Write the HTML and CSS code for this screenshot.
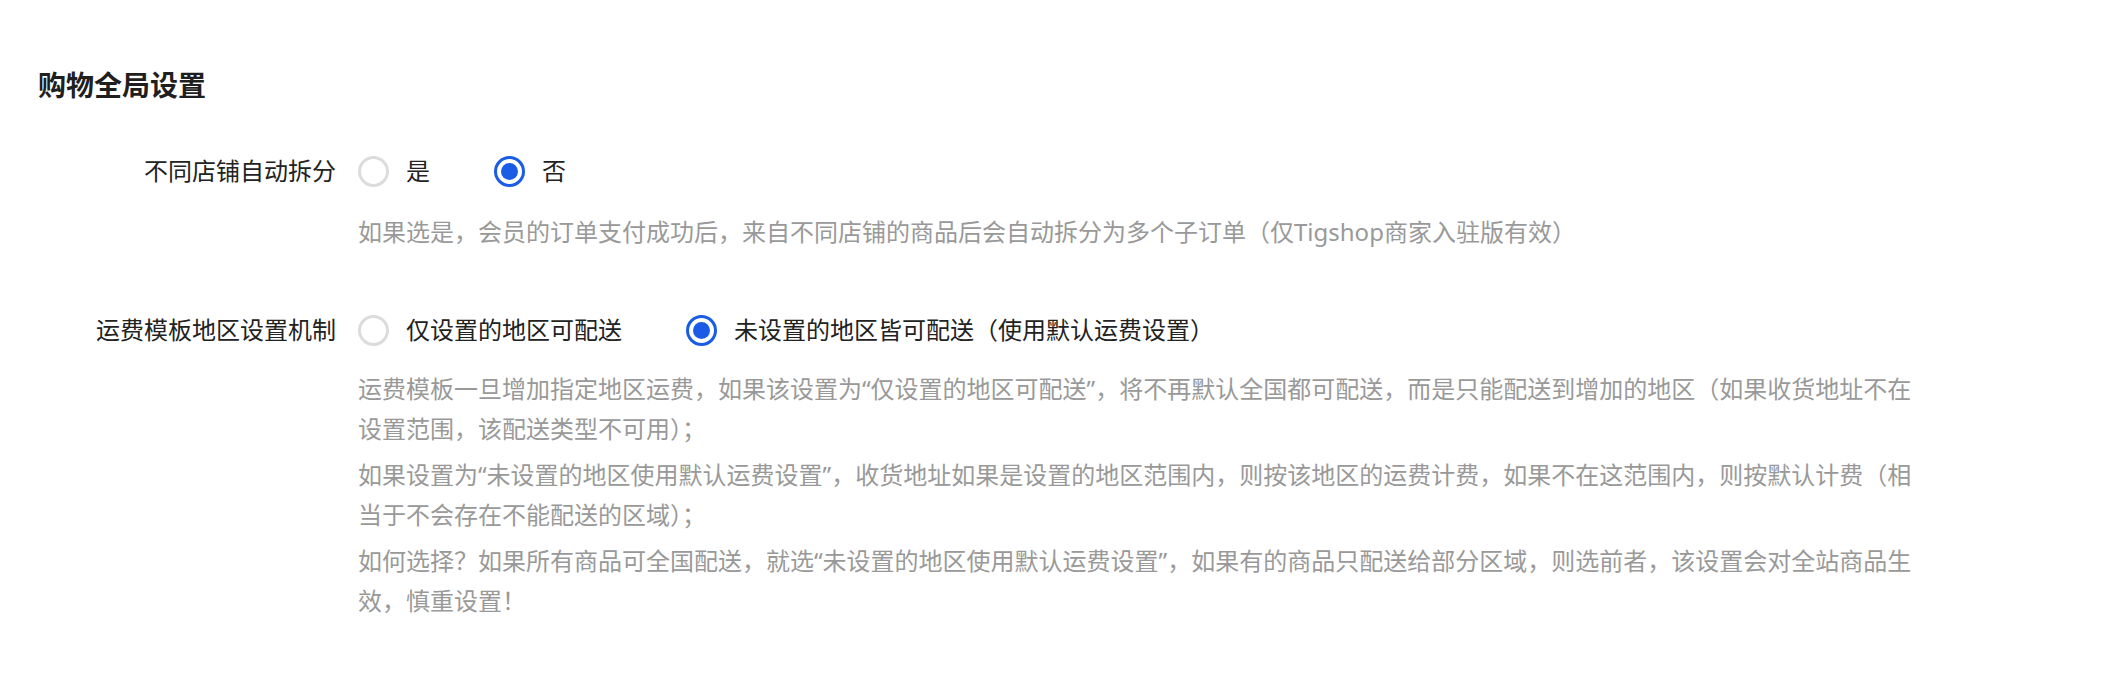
FILE: index.html
```html
<!DOCTYPE html>
<html lang="zh-CN">
<head>
<meta charset="utf-8">
<title>购物全局设置</title>
<link rel="stylesheet" href="styles.css">
</head>
<body>
<div class="page">
  <h2 class="title">购物全局设置</h2>
  <div class="form">
    <div class="item item-first">
      <div class="label">不同店铺自动拆分</div>
      <div class="content">
        <div class="radio-group">
          <label class="radio"><span class="circle"></span><span class="radio-text">是</span></label>
          <label class="radio checked"><span class="circle"></span><span class="radio-text">否</span></label>
        </div>
        <div class="tips">
          <p>如果选是，会员的订单支付成功后，来自不同店铺的商品后会自动拆分为多个子订单（仅Tigshop商家入驻版有效）</p>
        </div>
      </div>
    </div>
    <div class="item">
      <div class="label">运费模板地区设置机制</div>
      <div class="content">
        <div class="radio-group">
          <label class="radio"><span class="circle"></span><span class="radio-text">仅设置的地区可配送</span></label>
          <label class="radio checked"><span class="circle"></span><span class="radio-text">未设置的地区皆可配送（使用默认运费设置）</span></label>
        </div>
        <div class="tips tips-multi">
          <p>运费模板一旦增加指定地区运费，如果该设置为“仅设置的地区可配送”，将不再默认全国都可配送，而是只能配送到增加的地区（如果收货地址不在设置范围，该配送类型不可用）；</p>
          <p>如果设置为“未设置的地区使用默认运费设置”，收货地址如果是设置的地区范围内，则按该地区的运费计费，如果不在这范围内，则按默认计费（相当于不会存在不能配送的区域）；</p>
          <p>如何选择？如果所有商品可全国配送，就选“未设置的地区使用默认运费设置”，如果有的商品只配送给部分区域，则选前者，该设置会对全站商品生效，慎重设置！</p>
        </div>
      </div>
    </div>
  </div>
</div>
</body>
</html>
```

FILE: styles.css
```css
html, body {
  margin: 0;
  padding: 0;
  background: #ffffff;
}

body {
  font-family: "Noto Sans", "Noto Sans CJK SC", sans-serif;
  color: #303133;
}

.page {
  padding: 65px 0 0 38px;
}

.title {
  margin: 0;
  font-size: 28px;
  line-height: 40px;
  font-weight: 700;
  color: #1f1f1f;
}

.form {
  margin-top: 46px;
}

.item {
  display: flex;
  align-items: flex-start;
  margin-top: 52px;
}

.item-first {
  margin-top: 0;
}

.label {
  width: 298px;
  padding-right: 22px;
  text-align: right;
  font-size: 24px;
  line-height: 40px;
  color: #222222;
  flex-shrink: 0;
}

.content {
  width: 1574px;
}

.radio-group {
  display: flex;
  align-items: center;
  height: 40px;
}

.radio {
  display: inline-flex;
  align-items: center;
  gap: 17px;
  margin-right: 64px;
  cursor: pointer;
}

.circle {
  box-sizing: border-box;
  width: 31px;
  height: 31px;
  border: 3px solid #dcdcdc;
  border-radius: 50%;
  display: inline-flex;
  align-items: center;
  justify-content: center;
}

.checked .circle {
  border-color: #1a5ce6;
}

.checked .circle::after {
  content: "";
  width: 17px;
  height: 17px;
  border-radius: 50%;
  background: #1a5ce6;
}

.radio-text {
  font-size: 24px;
  line-height: 40px;
  color: #222222;
}

.tips {
  margin-top: 21px;
  color: #999999;
  font-size: 24px;
  line-height: 40px;
}

.tips-multi {
  margin-top: 19px;
}

.tips p {
  margin: 0 0 6px 0;
}
```
